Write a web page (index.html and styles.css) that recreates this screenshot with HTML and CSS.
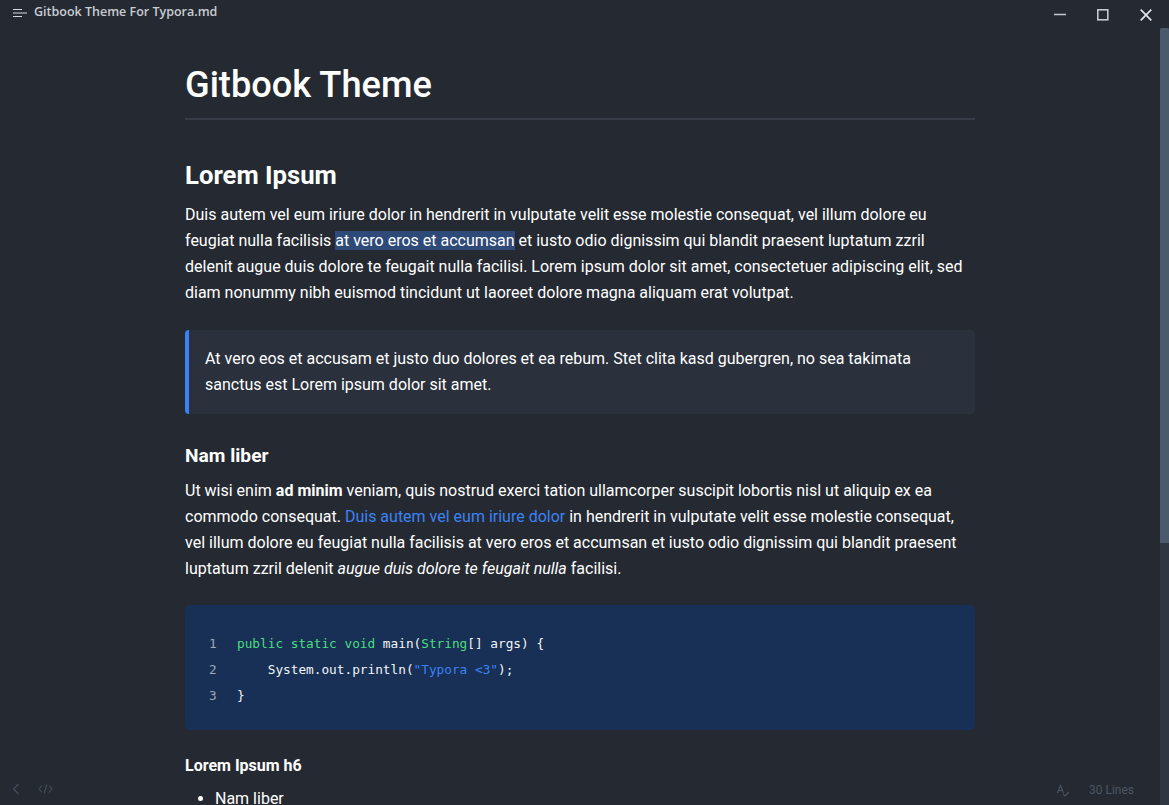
FILE: index.html
```html
<!DOCTYPE html>
<html lang="en">
<head>
    <meta charset="UTF-8">
    <meta name="viewport" content="width=device-width, initial-scale=1.0">
    <title>Gitbook Theme For Typora.md</title>
    <link rel="stylesheet" href="styles.css">
</head>
<body>
    <!-- Title bar -->
    <header class="titlebar">
        <div class="titlebar-left">
            <svg class="menu-icon" width="14" height="10" viewBox="0 0 14 10">
                <path d="M0 1.5H9M0 5H14M0 8.5H9" stroke="#d5d8dd" stroke-width="1" fill="none"/>
            </svg>
            <span class="file-name">Gitbook Theme For Typora.md</span>
        </div>
        <div class="window-buttons">
            <svg width="12" height="12" viewBox="0 0 12 12">
                <path d="M0 5.5H12" stroke="#c4c8cf" stroke-width="1.5" fill="none"/>
            </svg>
            <svg width="12" height="12" viewBox="0 0 12 12">
                <rect x="0.8" y="0.8" width="10" height="10" stroke="#c4c8cf" stroke-width="1.6" fill="none"/>
            </svg>
            <svg width="12" height="12" viewBox="0 0 12 12">
                <path d="M0.7 0.7L11.3 11.3M11.3 0.7L0.7 11.3" stroke="#e2e4e8" stroke-width="1.7" fill="none"/>
            </svg>
        </div>
    </header>

    <div class="scrollbar"><div class="scrollbar-thumb"></div></div>

    <!-- Document -->
    <main class="document">
        <h1>Gitbook Theme</h1>
        <h2>Lorem Ipsum</h2>
        <p>Duis autem vel eum iriure dolor in hendrerit in vulputate velit esse molestie consequat, vel illum dolore eu feugiat nulla facilisis <span class="selected">at vero eros et accumsan</span> et iusto odio dignissim qui blandit praesent luptatum zzril delenit augue duis dolore te feugait nulla facilisi. Lorem ipsum dolor sit amet, consectetuer adipiscing elit, sed diam nonummy nibh euismod tincidunt ut laoreet dolore magna aliquam erat volutpat.</p>
        <blockquote>At vero eos et accusam et justo duo dolores et ea rebum. Stet clita kasd gubergren, no sea takimata sanctus est Lorem ipsum dolor sit amet.</blockquote>
        <h4>Nam liber</h4>
        <p>Ut wisi enim <strong>ad minim</strong> veniam, quis nostrud exerci tation ullamcorper suscipit lobortis nisl ut aliquip ex ea commodo consequat. <a href="#">Duis autem vel eum iriure dolor</a> in hendrerit in vulputate velit esse molestie consequat, vel illum dolore eu feugiat nulla facilisis at vero eros et accumsan et iusto odio dignissim qui blandit praesent luptatum zzril delenit <em>augue duis dolore te feugait nulla</em> facilisi.</p>
        <div class="code-block">
            <div class="code-line"><span class="line-no">1</span><code><span class="kw">public static void</span> main(<span class="kw">String</span>[] args) {</code></div>
            <div class="code-line"><span class="line-no">2</span><code>    System.out.println(<span class="str">"Typora &lt;3"</span>);</code></div>
            <div class="code-line"><span class="line-no">3</span><code>}</code></div>
        </div>
        <h6>Lorem Ipsum h6</h6>
        <ul>
            <li>Nam liber</li>
        </ul>
    </main>

    <!-- Footer overlay -->
    <div class="footer-left">
        <svg width="10" height="12" viewBox="0 0 10 12">
            <path d="M7.5 1L2.5 6L7.5 11" stroke="#434c5a" stroke-width="1.4" fill="none"/>
        </svg>
        <svg width="15" height="12" viewBox="0 0 15 12">
            <path d="M4 2.5L1 6L4 9.5M11 2.5L14 6L11 9.5M8.8 1.5L6.2 10.5" stroke="#434c5a" stroke-width="1.1" fill="none"/>
        </svg>
    </div>
    <div class="footer-right">
        <span class="spell-icon">
            <svg width="13" height="13" viewBox="0 0 13 13">
                <path d="M0.5 9L3.5 1.5L6.5 9M1.6 6.5H5.4M6 10L7.8 12L12 8" stroke="#4b5564" stroke-width="1.1" fill="none"/>
            </svg>
        </span>
        <span class="line-count">30 Lines</span>
    </div>
</body>
</html>
```

FILE: styles.css
```css
/* General Styles */
html, body {
    height: 100%;
}

body {
    margin: 0;
    background: #252a32;
    color: #fff;
    font-family: Roboto, sans-serif;
    font-size: 16px;
    line-height: 26px;
    overflow: hidden;
}

/* Title bar */
.titlebar {
    position: absolute;
    top: 0;
    left: 0;
    right: 0;
    height: 28px;
    display: flex;
    justify-content: space-between;
}

.titlebar-left {
    display: flex;
    align-items: flex-start;
    padding-left: 13px;
}

.menu-icon {
    margin-top: 8px;
}

.file-name {
    margin-left: 7px;
    font-family: "Open Sans", sans-serif;
    font-size: 12.5px;
    font-weight: 600;
    line-height: 24px;
    color: #c8ccd3;
}

.window-buttons {
    display: flex;
    gap: 31px;
    padding: 9px 17px 0 0;
}

/* Scrollbar */
.scrollbar {
    position: absolute;
    top: 28px;
    right: 0;
    bottom: 0;
    width: 9px;
    background: #2f3743;
}

.scrollbar-thumb {
    height: 515px;
    background: #4b596c;
    border-radius: 2px 2px 0 0;
}

/* Document */
.document {
    width: 790px;
    margin: 0 0 0 185px;
    padding-top: 61px;
}

h1 {
    margin: 0;
    padding-bottom: 9px;
    border-bottom: 2px solid #363c48;
    font-size: 36.2px;
    font-weight: 500;
    line-height: 48px;
}

h2 {
    margin: 39px 0 11px;
    font-size: 25.7px;
    font-weight: 700;
    line-height: 32px;
}

p {
    margin: 0;
}

.selected {
    background: #2e4a78;
}

a {
    color: #3b82f6;
    text-decoration: none;
}

blockquote {
    margin: 24px 0 0;
    padding: 16px;
    border-left: 4px solid #3b82f6;
    border-radius: 4px;
    background: #2a303c;
}

h4 {
    margin: 29px 0 9px;
    font-size: 19.2px;
    font-weight: 700;
    line-height: 26px;
}

/* Code */
.code-block {
    margin-top: 23px;
    padding: 26px 0 21px;
    background: #183055;
    border-radius: 4px;
}

.code-line {
    display: flex;
    font-family: "DejaVu Sans Mono", monospace;
    font-size: 12.75px;
}

.line-no {
    width: 52px;
    padding-left: 24px;
    box-sizing: border-box;
    color: #a0a8b5;
}

code {
    font-family: inherit;
    white-space: pre;
    color: #f3f4f6;
}

.kw {
    color: #4ade80;
}

.str {
    color: #3b82f6;
}

h6 {
    margin: 23px 0 7px;
    font-size: 16px;
    font-weight: 700;
    line-height: 26px;
}

ul {
    margin: 0;
    padding-left: 30px;
}

/* Footer */
.footer-left {
    position: absolute;
    left: 11px;
    top: 783px;
    display: flex;
    gap: 17px;
}

.footer-right {
    position: absolute;
    right: 35px;
    top: 777px;
    display: flex;
    align-items: center;
    gap: 19px;
    font-size: 12px;
    color: #4b5564;
}

.spell-icon {
    display: flex;
    margin-top: 1px;
}
```
